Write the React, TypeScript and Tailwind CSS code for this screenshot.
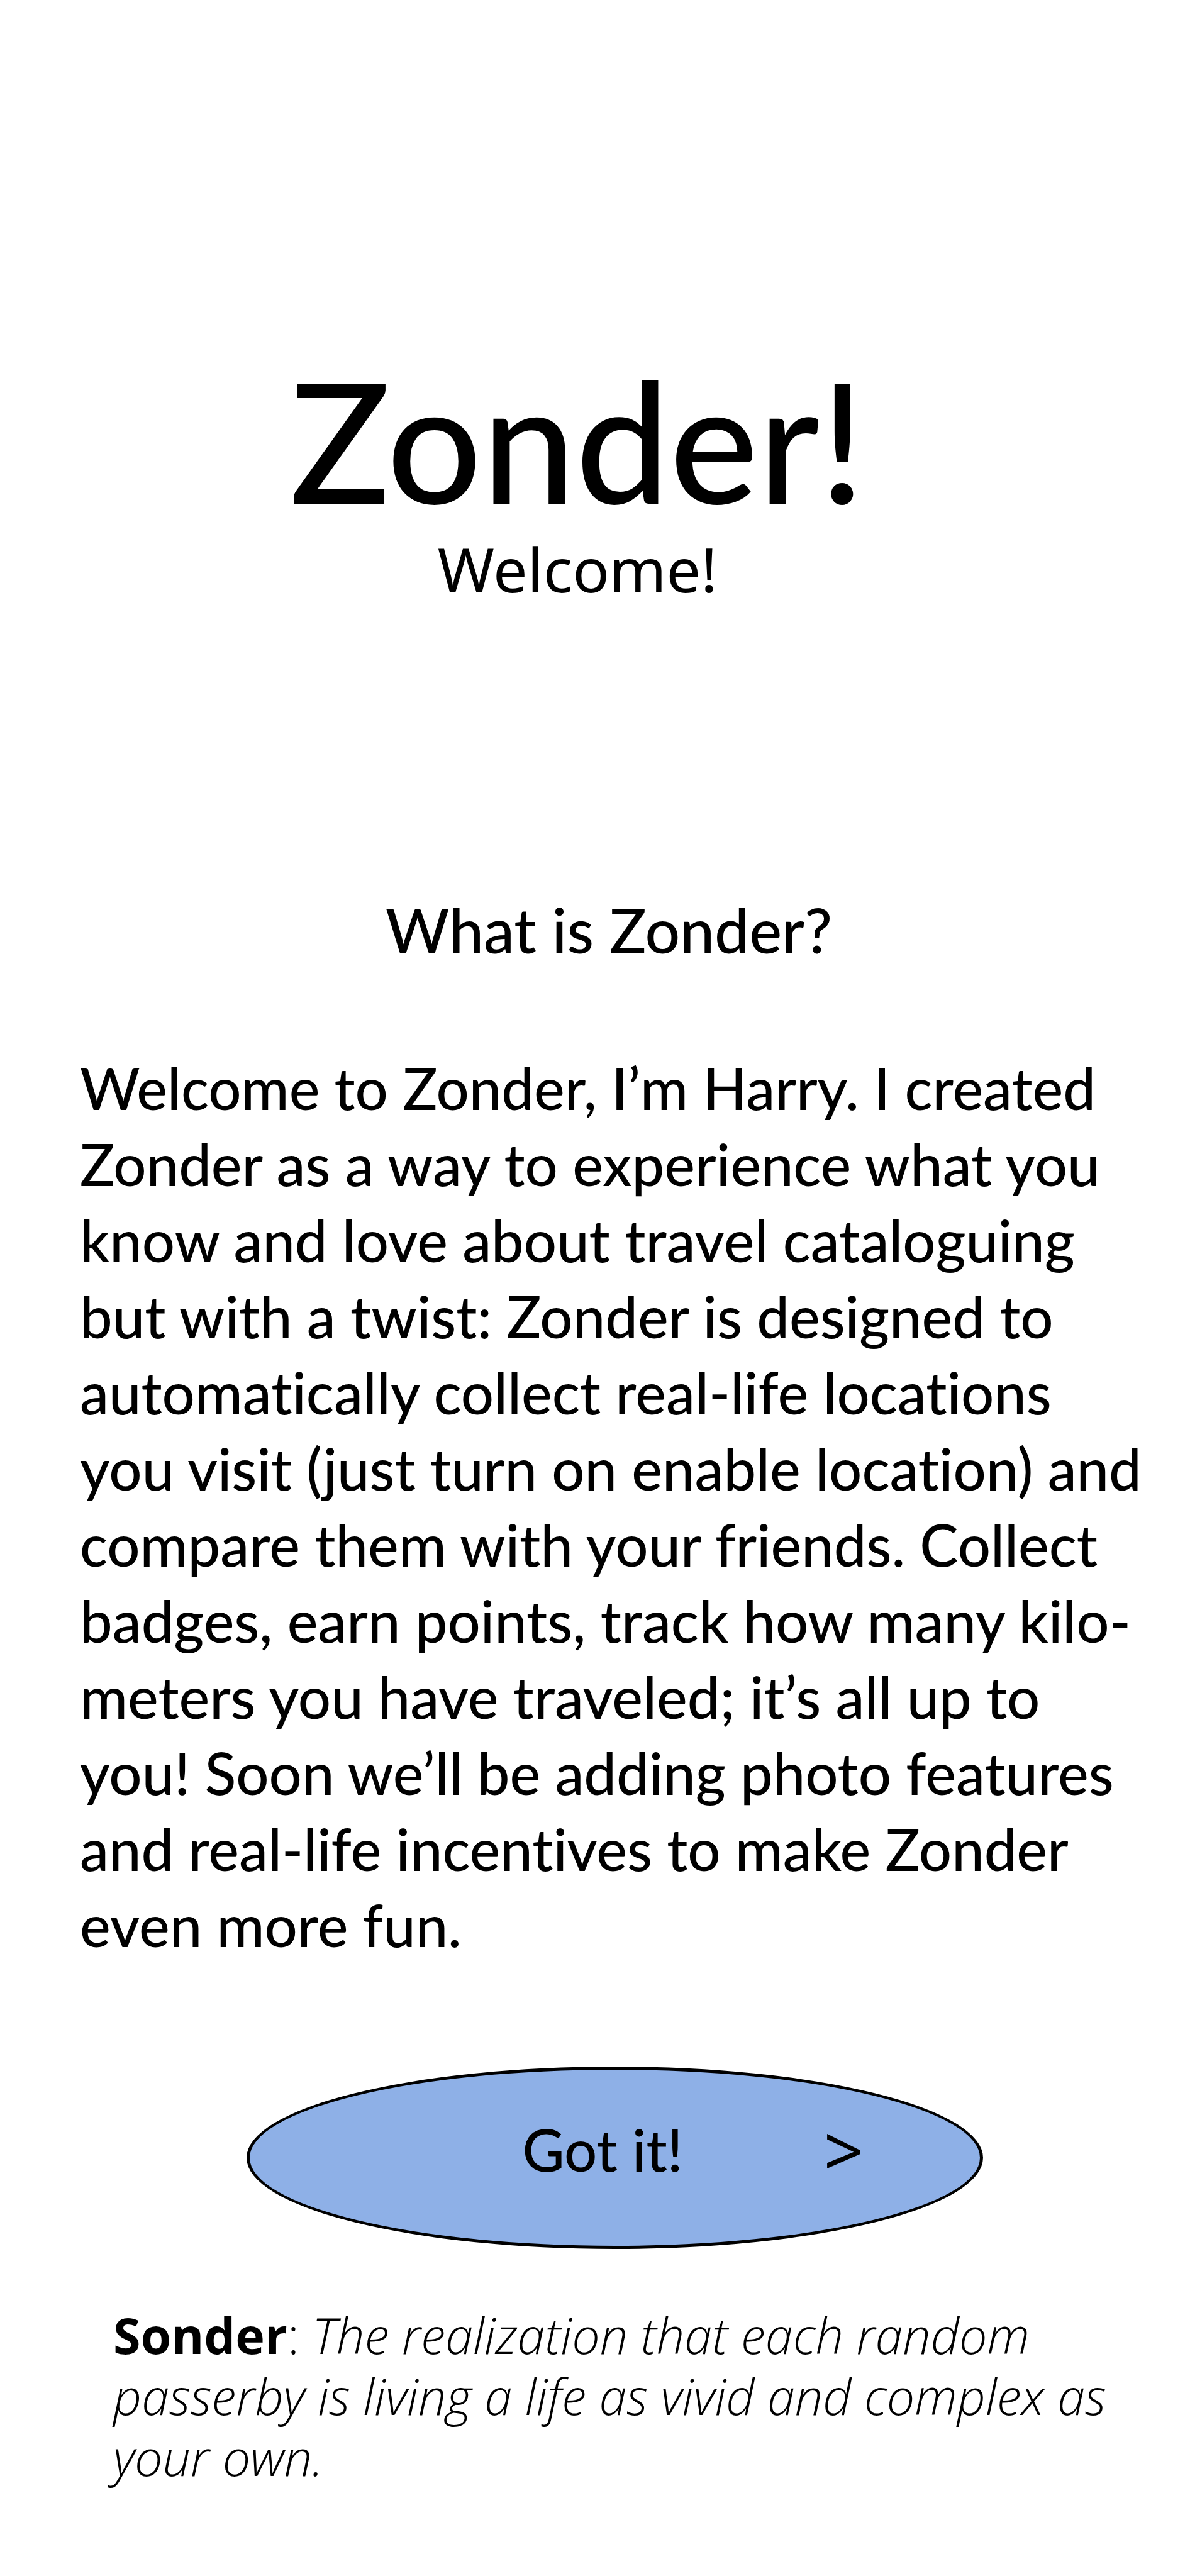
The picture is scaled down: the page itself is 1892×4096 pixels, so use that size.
const INTRO_LINES = [
  'Welcome to Zonder, I’m Harry. I created',
  'Zonder as a way to experience what you',
  'know and love about travel cataloguing',
  'but with a twist: Zonder is designed to',
  'automatically collect real-life locations',
  'you visit (just turn on enable location) and',
  'compare them with your friends. Collect',
  'badges, earn points, track how many kilo-',
  'meters you have traveled; it’s all up to',
  'you! Soon we’ll be adding photo features',
  'and real-life incentives to make Zonder',
  'even more fun.',
];

function Header() {
  return (
    <header className="pr-14 text-center">
      <h1 className="text-[266px] leading-[260px] font-medium">Zonder!</h1>
      <p className="mt-4 font-['Noto_Sans',sans-serif] text-[97px] leading-[120px]">Welcome!</p>
    </header>
  );
}

function About() {
  return (
    <section className="mt-[454px]">
      <h2 className="pl-11 text-center text-[98px] leading-[120px] font-medium">What is Zonder?</h2>
      <p className="mt-[131px] pl-[127px] text-[92px] leading-[121px] font-medium whitespace-nowrap [font-variant-ligatures:none]">
        {INTRO_LINES.map((line) => (
          <span key={line} className="block">
            {line}
          </span>
        ))}
      </p>
    </section>
  );
}

function Definition() {
  return (
    <p className="mt-[88px] pl-[180px] font-['Open_Sans',sans-serif] text-[79px] leading-[97px] font-light">
      <b className="font-bold">Sonder</b>:{' '}
      <i>
        The realization that each random
        <br />
        passerby is living a life as vivid and complex as
        <br />
        your own.
      </i>
    </p>
  );
}

export default function App() {
  return (
    <main className="overflow-x-hidden bg-white pt-[568px] pb-[141px] font-['Lato',sans-serif] text-black">
      <Header />
      <About />
      <div className="mt-[165px] flex justify-center pl-[62px]">
        <button
          type="button"
          className="flex h-[290px] w-[1171px] items-center justify-between rounded-[50%] border-[5px] border-black bg-[#8eb0e7] pr-[184px] pb-7 pl-[434px] text-[92px] leading-[121px] font-medium"
        >
          <span>Got it!</span>
          <span className="font-['Noto_Sans',sans-serif] text-[112px] font-normal">&gt;</span>
        </button>
      </div>
      <Definition />
    </main>
  );
}
